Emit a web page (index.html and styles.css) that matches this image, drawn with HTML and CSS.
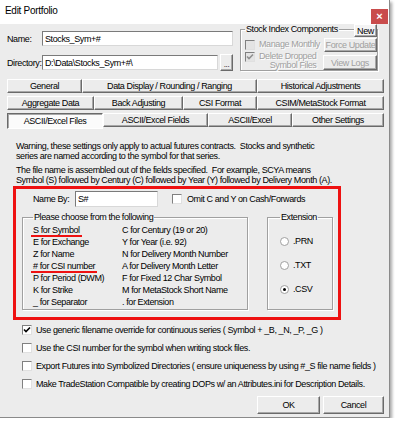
FILE: index.html
```html
<!DOCTYPE html>
<html lang="en">
<head>
    <meta charset="UTF-8">
    <meta name="viewport" content="width=device-width, initial-scale=1.0">
    <title>Edit Portfolio</title>
    <link rel="stylesheet" href="styles.css">
</head>
<body>
    <div class="window">
        <div class="titlebar">
            <span class="title">Edit Portfolio</span>
            <span class="close">&times;</span>
        </div>
        <div class="dialog">
            <div class="top">
                <div class="paths">
                    <div class="field-row">
                        <label for="name">Name:</label>
                        <input type="text" id="name" value="Stocks_Sym+#">
                    </div>
                    <div class="field-row">
                        <label for="dir">Directory:</label>
                        <input type="text" id="dir" value="D:\Data\Stocks_Sym+#\">
                        <button class="btn browse">...</button>
                    </div>
                </div>
                <fieldset class="group stock">
                    <legend>Stock Index Components</legend>
                    <button class="btn new">New</button>
                    <div class="stock-row">
                        <span class="check disabled"></span>
                        <span class="muted">Manage Monthly</span>
                        <button class="btn side" disabled>Force Update</button>
                    </div>
                    <div class="stock-row second">
                        <span class="check disabled checked"><svg viewBox="0 0 8 8"><polyline points="1,3.5 3,5.5 7,1.5"/></svg></span>
                        <span class="muted two-line">Delete Dropped<br>Symbol Files</span>
                        <button class="btn side" disabled>View Logs</button>
                    </div>
                </fieldset>
            </div>

            <div class="tabs">
                <div class="tab-row row-1">
                    <button class="btn tab">General</button>
                    <button class="btn tab">Data Display / Rounding / Ranging</button>
                    <button class="btn tab">Historical Adjustments</button>
                </div>
                <div class="tab-row row-2">
                    <button class="btn tab">Aggregate Data</button>
                    <button class="btn tab">Back Adjusting</button>
                    <button class="btn tab">CSI Format</button>
                    <button class="btn tab">CSIM/MetaStock Format</button>
                </div>
                <div class="tab-row row-3">
                    <button class="btn tab active">ASCII/Excel Files</button>
                    <button class="btn tab">ASCII/Excel Fields</button>
                    <button class="btn tab">ASCII/Excel</button>
                    <button class="btn tab">Other Settings</button>
                </div>
            </div>

            <p class="note">Warning, these settings only apply to actual futures contracts.&nbsp; Stocks and synthetic<br>series are named according to the symbol for that series.</p>
            <p class="note">The file name is assembled out of the fields specified.&nbsp; For example, SCYA means<br>Symbol (S) followed by Century (C) followed by Year (Y) followed by Delivery Month (A).</p>

            <div class="highlight">
                <div class="name-by">
                    <label for="nameBy">Name By:</label>
                    <input type="text" id="nameBy" value="S#">
                    <span class="check"></span>
                    <span>Omit C and Y on Cash/Forwards</span>
                </div>
                <div class="choices">
                    <fieldset class="group fields">
                        <legend>Please choose from the following</legend>
                        <div class="field-list">
                            <span><span class="marked">S for Symbol</span></span>
                            <span>C for Century (19 or 20)</span>
                            <span>E for Exchange</span>
                            <span>Y for Year (i.e. 92)</span>
                            <span>Z for Name</span>
                            <span>N for Delivery Month Number</span>
                            <span><span class="marked">#&nbsp;for CSI number</span></span>
                            <span>A for Delivery Month Letter</span>
                            <span>P for Period (DWM)</span>
                            <span>F for Fixed 12 Char Symbol</span>
                            <span>K for Strike</span>
                            <span>M for MetaStock Short Name</span>
                            <span>_ for Separator</span>
                            <span>. for Extension</span>
                        </div>
                    </fieldset>
                    <fieldset class="group extension">
                        <legend>Extension</legend>
                        <div class="radio-row"><span class="radio"></span>.PRN</div>
                        <div class="radio-row"><span class="radio"></span>.TXT</div>
                        <div class="radio-row"><span class="radio checked"></span>.CSV</div>
                    </fieldset>
                </div>
            </div>

            <div class="options">
                <div class="option"><span class="check checked"><svg viewBox="0 0 8 8"><polyline points="1,3.5 3,5.5 7,1.5"/></svg></span>Use generic filename override for continuous series ( Symbol + _B, _N, _P, _G )</div>
                <div class="option"><span class="check"></span>Use the CSI number for the symbol when writing stock files.</div>
                <div class="option"><span class="check"></span>Export Futures into Symbolized Directories ( ensure uniqueness by using #_S file name fields )</div>
                <div class="option"><span class="check"></span>Make TradeStation Compatible by creating DOPs w/ an Attributes.ini for Description Details.</div>
            </div>

            <div class="actions">
                <button class="btn ok">OK</button>
                <button class="btn cancel">Cancel</button>
            </div>
        </div>
    </div>
</body>
</html>
```

FILE: styles.css
```css
* { box-sizing: border-box; }
body {
    margin: 0;
    background: #fff;
    font-family: "Liberation Sans", Arial, sans-serif;
    font-size: 9px;
    letter-spacing: -0.4px;
    color: #000;
}
.window {
    width: 390px;
    height: 418px;
    background: #ececec;
    border-right: 1px solid #8a8a8a;
    border-bottom: 1px solid #8a8a8a;
    box-shadow: 2px 2px 3px rgba(0,0,0,0.35);
}
.titlebar {
    height: 24px;
    background: #fff;
    display: flex;
    justify-content: space-between;
    padding: 0 0 0 5px;
}
.title {
    font-size: 10px;
    letter-spacing: -0.3px;
    padding-top: 5px;
}
.close {
    align-self: flex-end;
    width: 17px;
    height: 15px;
    margin-right: 1px;
    background: #c94c4c;
    color: #fff;
    font-weight: bold;
    font-size: 11px;
    letter-spacing: 0;
    line-height: 15px;
    text-align: center;
}
.dialog { padding: 0 5px 0 7px; }

/* top area */
.top {
    display: grid;
    grid-template-columns: 226px 138px;
    gap: 7px;
}
.paths {
    display: flex;
    flex-direction: column;
    gap: 9px;
    padding-top: 7px;
}
.field-row {
    display: flex;
    align-items: center;
    height: 15px;
}
.field-row label { width: 35px; white-space: nowrap; }
.field-row input { flex: 1; min-width: 0; }
input {
    height: 15px;
    border: 1px solid;
    border-color: #7a7a7a #d8d8d8 #d8d8d8 #7a7a7a;
    background: #fff;
    font: inherit;
    letter-spacing: inherit;
    padding: 0 2px;
    outline: none;
}
.btn {
    font: inherit;
    letter-spacing: inherit;
    color: #000;
    background: #ececec;
    border: 1px solid;
    border-color: #fff #6a6a6a #6a6a6a #fff;
    box-shadow: inset -1px -1px 0 #a8a8a8;
    padding: 0;
    white-space: nowrap;
}
.btn:disabled { color: #a0a0a0; }
.browse {
    width: 13px;
    height: 17px;
    margin-left: 2px;
    font-size: 8px;
    line-height: 20px;
}
.group {
    margin: 0;
    min-width: 0;
    border: 1px solid #a0a0a0;
    box-shadow: 1px 1px 0 #fff, inset 1px 1px 0 #fff;
}
.group legend {
    padding: 0 1px;
    line-height: 10px;
    white-space: nowrap;
}
.stock {
    position: relative;
    padding: 4px 0 0 4px;
    height: 47px;
}
.stock .new {
    position: absolute;
    top: -10px;
    right: 0;
    width: 23px;
    height: 13px;
    background: #f4f4f4;
}
.stock-row {
    display: flex;
    align-items: flex-start;
    gap: 4px;
    height: 14px;
}
.stock-row .side {
    margin-left: auto;
    width: 54px;
    height: 14px;
}
.stock-row .check { margin-top: 2px; }
.stock-row.second { height: 18px; }
.stock-row.second .check { margin-top: 0; }
.stock-row.second .side { height: 15px; margin-top: 3px; }
.muted {
    color: #a0a0a0;
    text-shadow: 1px 1px 0 #fff;
    line-height: 10px;
    padding-top: 1px;
    white-space: nowrap;
}
.two-line { text-align: right; line-height: 9px; padding-top: 0; }

/* checkboxes and radios */
.check {
    flex: none;
    display: inline-block;
    width: 10px;
    height: 10px;
    border: 1px solid;
    border-color: #808080 #e0e0e0 #e0e0e0 #808080;
    background: #fff;
    margin-top: 1px;
}
.check.disabled { background: #e4e4e4; }
.check svg {
    display: block;
    width: 8px;
    height: 8px;
}
.check polyline {
    fill: none;
    stroke: #000;
    stroke-width: 1.6;
}
.check.disabled polyline { stroke: #909090; }
.radio {
    display: inline-block;
    width: 9px;
    height: 9px;
    border-radius: 50%;
    border: 1px solid #a0a0a0;
    background: #fff;
    margin-right: 4px;
    position: relative;
}
.radio.checked::after {
    content: "";
    position: absolute;
    left: 2px;
    top: 2px;
    width: 3px;
    height: 3px;
    border-radius: 50%;
    background: #000;
}

/* tab buttons */
.tabs {
    margin-top: 8px;
    display: flex;
    flex-direction: column;
    gap: 3px;
}
.tab-row { display: grid; }
.row-1 { grid-template-columns: 75px 175px 1fr; }
.row-2 { grid-template-columns: 87px 89px 74px 1fr; }
.row-3 { grid-template-columns: 96px 105px 84px 1fr; }
.tab { height: 14px; }
.tab.active {
    height: 16px;
    background: #fbfbfb;
    border-color: #6a6a6a #fff #fff #6a6a6a;
    box-shadow: inset 1px 1px 0 #a8a8a8;
}

/* notes */
.note {
    margin: 4px 0 0 9px;
    line-height: 10px;
    white-space: nowrap;
}
.tabs + .note { margin-top: 12px; }

/* highlighted section */
.highlight {
    margin: 1px 0 0 6px;
    width: 328px;
    height: 134px;
    border: 3px solid #ee1111;
    padding: 2px 5px 0 6px;
}
.name-by {
    display: flex;
    align-items: center;
    padding-left: 11px;
    height: 16px;
    white-space: nowrap;
}
.name-by label { width: 42px; }
.name-by input { width: 83px; height: 16px; }
.name-by .check { margin: 0 5px 0 14px; }
.choices {
    display: flex;
    justify-content: space-between;
    margin-top: 5px;
}
.fields {
    width: 226px;
    padding: 2px 4px 1px 10px;
}
.field-list {
    display: grid;
    grid-template-columns: 89px 1fr;
    line-height: 12px;
    white-space: nowrap;
}
.marked {
    border-bottom: 2px solid #ee1111;
    padding: 0 2px;
    margin-left: -2px;
}
.extension {
    width: 66px;
    padding: 13px 0 0 12px;
}
.radio-row {
    display: flex;
    align-items: center;
    height: 12px;
    margin-bottom: 12px;
}

/* options */
.options {
    margin-top: 1px;
    padding-left: 15px;
}
.option {
    display: flex;
    align-items: center;
    height: 18px;
    white-space: nowrap;
}
.option .check { margin: 0 4px 0 0; }

.actions {
    display: flex;
    justify-content: flex-end;
    gap: 3px;
    margin-top: 3px;
}
.actions .btn { height: 18px; }
.ok { width: 63px; }
.cancel { width: 61px; }
```
